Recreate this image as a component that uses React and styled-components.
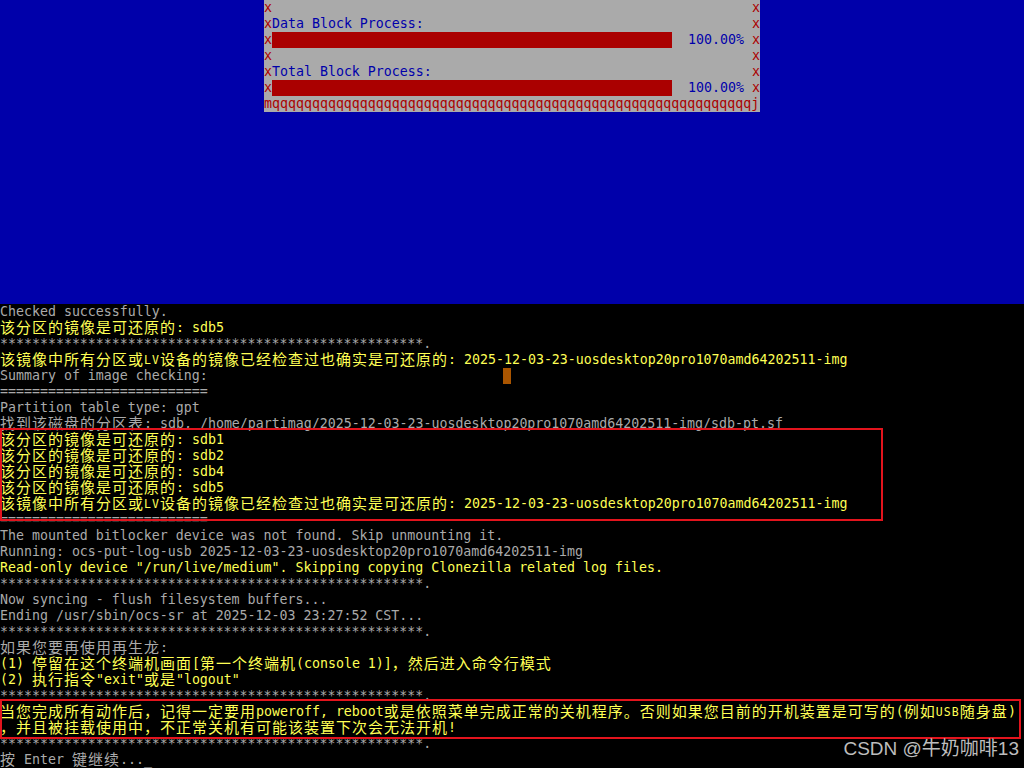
import React from 'react';
import styled, { createGlobalStyle } from 'styled-components';

const GlobalStyle = createGlobalStyle`
    html,
    body {
        margin: 0;
        padding: 0;
        background: #000;
    }
    body {
        width: 1024px;
        height: 768px;
        overflow: hidden;
    }
`;

const Screen = styled.div`
    position: relative;
    width: 1024px;
    height: 768px;
    display: flex;
    flex-direction: column;
    background: #000;
    font-family: 'DejaVu Sans Mono', 'Liberation Mono', monospace;
    font-size: 13.28px;
    line-height: 16px;
    overflow: hidden;
`;

const BluePane = styled.div`
    flex: none;
    height: 304px;
    background: #0000aa;
`;

const Dialog = styled.div`
    width: 496px;
    margin: 0 auto;
    background: #aaaaaa;
    color: #0000aa;
`;

const DialogRow = styled.div`
    display: flex;
    height: 16px;
    white-space: pre;
`;

const Edge = styled.span`
    flex: none;
    width: 8px;
    color: #aa0000;
`;

const RowBody = styled.div`
    flex: 1;
    display: flex;
`;

const Bar = styled.div`
    width: 400px;
    height: 16px;
    background: #aa0000;
`;

const Percent = styled.span`
    margin-left: auto;
    padding-right: 8px;
`;

const BottomEdge = styled.div`
    height: 16px;
    color: #aa0000;
    white-space: pre;
`;

const Terminal = styled.div`
    position: relative;
    flex: 1;
    background: #000;
`;

const Line = styled.div`
    height: 16px;
    white-space: pre;
    color: ${p => (p.$yellow ? '#ffff55' : '#aaaaaa')};
`;

const Cjk = styled.span`
    font-family: 'Noto Sans CJK SC', 'Noto Sans CJK JP', sans-serif;
    font-size: 15px;
    letter-spacing: 1px;
    line-height: 0;
    vertical-align: -1px;
`;

const Tiny = styled.span`
    font-size: 11.5px;
    letter-spacing: 1.08px;
    line-height: 0;
`;

const Block = styled.span`
    display: inline-block;
    width: 8px;
    height: 16px;
    vertical-align: top;
    background: #aa5500;
`;

const Marker = styled.div`
    position: absolute;
    left: 0;
    top: ${p => p.$top}px;
    width: ${p => p.$width}px;
    height: ${p => p.$height}px;
    border: 2px solid #e3141d;
    box-sizing: border-box;
    pointer-events: none;
`;

const Watermark = styled.div`
    position: absolute;
    right: 5px;
    top: 737px;
    font-family: 'Liberation Sans', 'Noto Sans CJK SC', sans-serif;
    font-size: 19px;
    line-height: 24px;
    color: #bdbdbd;
    white-space: nowrap;
`;

const CJK_RE = /([\u2e80-\u9fff\u3000-\u303f\uff00-\uffef]+)/;

// split a console line into mono runs, double-width CJK runs and {small} runs
function renderText(str) {
    const out = [];
    str.split(/(\{[^}]*\})/).forEach((chunk, i) => {
        if (chunk.startsWith('{') && chunk.endsWith('}')) {
            out.push(<Tiny key={i}>{chunk.slice(1, -1)}</Tiny>);
            return;
        }
        chunk.split(CJK_RE).forEach((part, j) => {
            if (!part) return;
            const key = `${i}-${j}`;
            out.push(j % 2 ? <Cjk key={key}>{part}</Cjk> : <React.Fragment key={key}>{part}</React.Fragment>);
        });
    });
    return out;
}

const STARS = '*'.repeat(53) + '.';
const EQUALS = '='.repeat(26);
const IMG = '2025-12-03-23-uosdesktop20pro1070amd64202511-img';
const ALL_OK = `该镜像中所有分区或{LV}设备的镜像已经检查过也确实是可还原的: ${IMG}`;

const lines = [
    { t: 'Checked successfully.' },
    { y: true, t: '该分区的镜像是可还原的: sdb5' },
    { t: STARS },
    { y: true, t: ALL_OK },
    { t: 'Summary of image checking:' + ' '.repeat(37), cursor: true },
    { t: EQUALS },
    { t: 'Partition table type: gpt' },
    { t: `找到该磁盘的分区表: sdb, /home/partimag/${IMG}/sdb-pt.sf` },
    { y: true, t: '该分区的镜像是可还原的: sdb1' },
    { y: true, t: '该分区的镜像是可还原的: sdb2' },
    { y: true, t: '该分区的镜像是可还原的: sdb4' },
    { y: true, t: '该分区的镜像是可还原的: sdb5' },
    { y: true, t: ALL_OK },
    { t: EQUALS },
    { t: 'The mounted bitlocker device was not found. Skip unmounting it.' },
    { t: `Running: ocs-put-log-usb ${IMG}` },
    { y: true, t: 'Read-only device "/run/live/medium". Skipping copying Clonezilla related log files.' },
    { t: STARS },
    { t: 'Now syncing - flush filesystem buffers...' },
    { t: 'Ending /usr/sbin/ocs-sr at 2025-12-03 23:27:52 CST...' },
    { t: STARS },
    { t: '如果您要再使用再生龙:' },
    { y: true, t: '(1) 停留在这个终端机画面[第一个终端机(console 1)]，然后进入命令行模式' },
    { y: true, t: '(2) 执行指令"exit"或是"logout"' },
    { t: STARS },
    {
        y: true,
        t: '当您完成所有动作后，记得一定要用poweroff, reboot或是依照菜单完成正常的关机程序。否则如果您目前的开机装置是可写的(例如{USB}随身盘)',
    },
    { y: true, t: '，并且被挂载使用中，不正常关机有可能该装置下次会无法开机!' },
    { t: STARS },
    { t: '按 Enter 键继续..._' },
];

function ProgressDialog() {
    return (
        <Dialog>
            <DialogRow>
                <Edge>x</Edge>
                <RowBody />
                <Edge>x</Edge>
            </DialogRow>
            <DialogRow>
                <Edge>x</Edge>
                <RowBody>Data Block Process:</RowBody>
                <Edge>x</Edge>
            </DialogRow>
            <DialogRow>
                <Edge>x</Edge>
                <RowBody>
                    <Bar />
                    <Percent>100.00%</Percent>
                </RowBody>
                <Edge>x</Edge>
            </DialogRow>
            <DialogRow>
                <Edge>x</Edge>
                <RowBody />
                <Edge>x</Edge>
            </DialogRow>
            <DialogRow>
                <Edge>x</Edge>
                <RowBody>Total Block Process:</RowBody>
                <Edge>x</Edge>
            </DialogRow>
            <DialogRow>
                <Edge>x</Edge>
                <RowBody>
                    <Bar />
                    <Percent>100.00%</Percent>
                </RowBody>
                <Edge>x</Edge>
            </DialogRow>
            <BottomEdge>{'m' + 'q'.repeat(60) + 'j'}</BottomEdge>
        </Dialog>
    );
}

export default function App() {
    return (
        <Screen>
            <GlobalStyle />
            <BluePane>
                <ProgressDialog />
            </BluePane>
            <Terminal>
                {lines.map((line, i) => (
                    <Line key={i} $yellow={line.y}>
                        {renderText(line.t)}
                        {line.cursor && <Block />}
                    </Line>
                ))}
                <Marker $top={124} $width={883} $height={93} />
                <Marker $top={395} $width={1021} $height={40} />
            </Terminal>
            <Watermark>CSDN @牛奶咖啡13</Watermark>
        </Screen>
    );
}
